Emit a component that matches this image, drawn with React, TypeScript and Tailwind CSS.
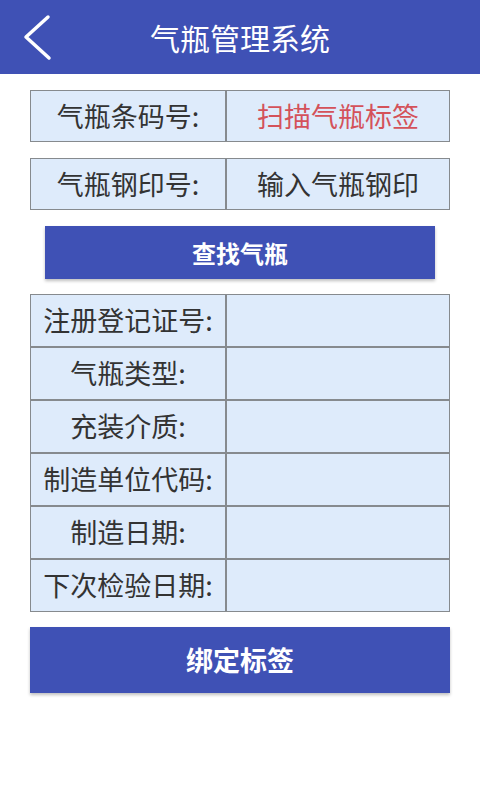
import React from 'react';

const font = { fontFamily: '"Noto Sans CJK SC", "Noto Sans", sans-serif' };

const infoRows = ['注册登记证号:', '气瓶类型:', '充装介质:', '制造单位代码:', '制造日期:', '下次检验日期:'];

const Row = ({ label, value, valueClass = '' }: { label: string; value?: string; valueClass?: string }) => (
  <div className="flex gap-[2px] h-[51px]">
    <div className="w-[194px] bg-[#deebfb] flex items-center justify-center text-[27px] text-[#333]">{label}</div>
    <div className={`flex-1 bg-[#deebfb] flex items-center justify-center text-[27px] ${valueClass}`}>{value}</div>
  </div>
);

export default function App() {
  return (
    <div className="w-[480px] h-[800px] bg-white" style={font}>
      <div className="h-[74px] bg-[#3f51b5] flex items-center relative">
        <svg className="absolute left-[22px] top-[14px]" width="32" height="48" viewBox="0 0 32 48">
          <path d="M26 3 L4 23 L27 44" fill="none" stroke="white" strokeWidth="3.5" strokeLinecap="round" strokeLinejoin="round" />
        </svg>
        <div className="flex-1 text-center text-white text-[30px] leading-none">气瓶管理系统</div>
      </div>

      <div className="px-[30px] pt-[16px] flex flex-col">
        <div className="bg-[#868a8e] p-px">
          <div className="flex gap-[2px] h-[50px]">
            <div className="w-[194px] bg-[#deebfb] flex items-center justify-center text-[27px] text-[#333]">气瓶条码号:</div>
            <div className="flex-1 bg-[#deebfb] flex items-center justify-center text-[27px] text-[#d4525a]">扫描气瓶标签</div>
          </div>
        </div>

        <div className="bg-[#868a8e] p-px mt-[16px]">
          <div className="flex gap-[2px] h-[50px]">
            <div className="w-[194px] bg-[#deebfb] flex items-center justify-center text-[27px] text-[#333]">气瓶钢印号:</div>
            <div className="flex-1 bg-[#deebfb] flex items-center justify-center text-[27px] text-[#333]">输入气瓶钢印</div>
          </div>
        </div>

        <div className="mx-[15px] mt-[16px] h-[53px] bg-[#3f51b5] flex items-center justify-center text-white text-[24px] font-bold shadow-[0_2px_3px_rgba(0,0,0,0.25)]">
          查找气瓶
        </div>

        <div className="bg-[#868a8e] p-px mt-[15px] flex flex-col gap-[2px]">
          {infoRows.map((l) => (
            <Row key={l} label={l} />
          ))}
        </div>

        <div className="mt-[15px] h-[66px] bg-[#3f51b5] flex items-center justify-center text-white text-[27px] font-bold shadow-[0_2px_3px_rgba(0,0,0,0.25)]">
          绑定标签
        </div>
      </div>
    </div>
  );
}
